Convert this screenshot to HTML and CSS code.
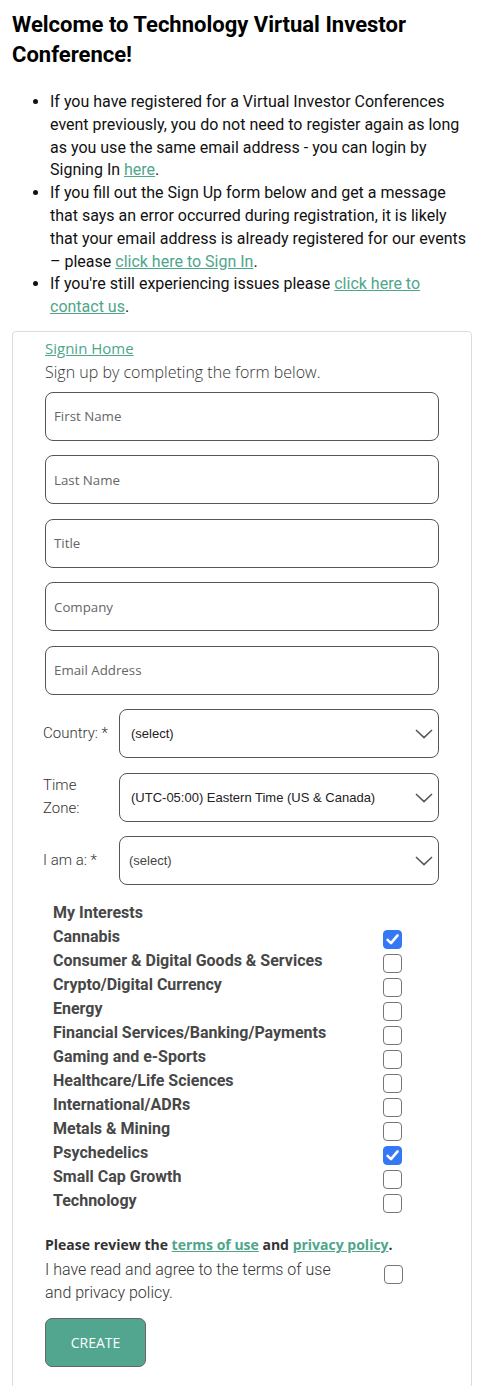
FILE: index.html
```html
<!DOCTYPE html>
<html lang="en">
<head>
<meta charset="utf-8">
<title>Technology Virtual Investor Conference - Sign Up</title>
<link rel="stylesheet" href="styles.css">
</head>
<body>
<h1 class="title">Welcome to Technology Virtual Investor Conference!</h1>
<ul class="notes">
  <li>If you have registered for a Virtual Investor Conferences event previously, you do not need to register again as long as you use the same email address - you can login by Signing In <a href="#">here</a>.</li>
  <li>If you fill out the Sign Up form below and get a message that says an error occurred during registration, it is likely that your email address is already registered for our events – please <a href="#">click here to Sign In</a>.</li>
  <li>If you're still experiencing issues please <a href="#">click here to contact us</a>.</li>
</ul>

<div class="card">
  <a class="home" href="#">Signin Home</a>
  <p class="intro">Sign up by completing the form below.</p>

  <div class="fields">
    <input class="field" type="text" placeholder="First Name">
    <input class="field" type="text" placeholder="Last Name">
    <input class="field" type="text" placeholder="Title">
    <input class="field" type="text" placeholder="Company">
    <input class="field" type="text" placeholder="Email Address">

    <div class="select-row">
      <label class="select-label">Country:&nbsp;*</label>
      <div class="select-wrap">
        <select class="select"><option>(select)</option></select>
        <svg class="chev" width="18" height="10" viewBox="0 0 18 10"><path d="M1 1 L9 8.6 L17 1" fill="none" stroke="#555" stroke-width="1.5"/></svg>
      </div>
    </div>
    <div class="select-row">
      <label class="select-label">Time<br>Zone:</label>
      <div class="select-wrap">
        <select class="select"><option>(UTC-05:00) Eastern Time (US &amp; Canada)</option></select>
        <svg class="chev" width="18" height="10" viewBox="0 0 18 10"><path d="M1 1 L9 8.6 L17 1" fill="none" stroke="#555" stroke-width="1.5"/></svg>
      </div>
    </div>
    <div class="select-row">
      <label class="select-label">I am a:&nbsp;*</label>
      <div class="select-wrap">
        <select class="select select-alt"><option>(select)</option></select>
        <svg class="chev" width="18" height="10" viewBox="0 0 18 10"><path d="M1 1 L9 8.6 L17 1" fill="none" stroke="#555" stroke-width="1.5"/></svg>
      </div>
    </div>
  </div>

  <div class="interests">
    <div class="int-head">My Interests</div>
    <div class="int-row"><span>Cannabis</span><span class="cb checked"><svg width="19" height="19" viewBox="0 0 19 19"><path d="M4.6 9.8 L8 13.2 L14.6 5.4" fill="none" stroke="#fff" stroke-width="2.6" stroke-linecap="round" stroke-linejoin="round"/></svg></span></div>
    <div class="int-row"><span>Consumer &amp; Digital Goods &amp; Services</span><span class="cb"></span></div>
    <div class="int-row"><span>Crypto/Digital Currency</span><span class="cb"></span></div>
    <div class="int-row"><span>Energy</span><span class="cb"></span></div>
    <div class="int-row"><span>Financial Services/Banking/Payments</span><span class="cb"></span></div>
    <div class="int-row"><span>Gaming and e-Sports</span><span class="cb"></span></div>
    <div class="int-row"><span>Healthcare/Life Sciences</span><span class="cb"></span></div>
    <div class="int-row"><span>International/ADRs</span><span class="cb"></span></div>
    <div class="int-row"><span>Metals &amp; Mining</span><span class="cb"></span></div>
    <div class="int-row"><span>Psychedelics</span><span class="cb checked"><svg width="19" height="19" viewBox="0 0 19 19"><path d="M4.6 9.8 L8 13.2 L14.6 5.4" fill="none" stroke="#fff" stroke-width="2.6" stroke-linecap="round" stroke-linejoin="round"/></svg></span></div>
    <div class="int-row"><span>Small Cap Growth</span><span class="cb"></span></div>
    <div class="int-row"><span>Technology</span><span class="cb"></span></div>
  </div>

  <p class="terms">Please review the <a href="#">terms of use</a> and <a href="#">privacy policy</a>.</p>
  <div class="agree">
    <span class="agree-text">I have read and agree to the terms of use and privacy policy.</span>
    <span class="cb agree-cb"></span>
  </div>

  <button class="create" type="button">CREATE</button>
</div>
</body>
</html>
```

FILE: styles.css
```css
html, body {
  margin: 0;
  padding: 0;
  background: #fff;
}
body {
  padding: 0 12px;
  font-family: Roboto, "Liberation Sans", Arial, sans-serif;
  color: #111;
}
a {
  color: #4ea68b;
  text-decoration: underline;
}
.title {
  margin: 10px 0 0;
  font-size: 22px;
  line-height: 30px;
  font-weight: 700;
  color: #000;
}
.notes {
  margin: 21px 0 0;
  padding-left: 38px;
  font-size: 16px;
  line-height: 22.8px;
  color: #111;
}
.card {
  margin-top: 12px;
  width: 460px;
  box-sizing: border-box;
  border: 1px solid #dcdcdc;
  border-radius: 4px;
  padding: 4px 32px 40px;
}
.home {
  display: block;
  font-family: "Open Sans", sans-serif;
  font-size: 15px;
  line-height: 24px;
  width: max-content;
}
.intro {
  margin: 0;
  font-family: "Open Sans", sans-serif;
  font-weight: 300;
  font-size: 16px;
  line-height: 24px;
  color: #333;
}
.fields {
  margin-top: 8px;
  display: flex;
  flex-direction: column;
  gap: 14.5px;
}
.field {
  display: block;
  width: 100%;
  height: 49px;
  box-sizing: border-box;
  border: 1px solid #555;
  border-radius: 8px;
  padding: 0 8px;
  font-family: "Open Sans", sans-serif;
  font-size: 13.3px;
  color: #333;
  background: #fff;
  outline: none;
}
.field::placeholder {
  color: #666;
}
.select-row {
  display: grid;
  grid-template-columns: 74px 1fr;
  align-items: center;
}
.select-label {
  margin-left: -2px;
  font-size: 15px;
  font-weight: 300;
  line-height: 23px;
  color: #333;
  white-space: nowrap;
}
.select-wrap {
  position: relative;
}
.select {
  display: block;
  width: 100%;
  height: 49px;
  box-sizing: border-box;
  border: 1px solid #555;
  border-radius: 8px;
  padding: 0 40px 0 11px;
  background: #fff;
  appearance: none;
  -webkit-appearance: none;
  font-family: "Liberation Sans", Arial, sans-serif;
  font-size: 13px;
  color: #222;
  outline: none;
}
.select-alt {
  padding-left: 9px;
  color: #444;
}
.chev {
  position: absolute;
  right: 6px;
  top: 20px;
  pointer-events: none;
}
.interests {
  margin-top: 15.5px;
  padding-left: 8px;
  font-size: 16px;
  font-weight: 700;
  line-height: 24px;
  color: #474747;
}
.int-head {
  height: 24px;
}
.int-row {
  display: grid;
  grid-template-columns: 330px 19px;
  height: 24px;
}
.cb {
  display: block;
  width: 19px;
  height: 19px;
  box-sizing: border-box;
  border: 1px solid #767676;
  border-radius: 4px;
  background: #fff;
  margin-top: 5px;
}
.cb.checked {
  border-color: #3478f6;
  background: #3478f6;
}
.cb.checked svg {
  display: block;
  margin: -1px;
}
.terms {
  margin: 20.5px 0 0;
  font-family: "Open Sans", sans-serif;
  font-size: 14px;
  font-weight: 700;
  line-height: 23px;
  color: #333;
}
.terms a {
  color: #4ea68b;
}
.agree {
  margin-top: 1.5px;
  display: grid;
  grid-template-columns: 339px 19px;
  align-items: start;
}
.agree-text {
  max-width: 300px;
  font-size: 16px;
  font-weight: 300;
  line-height: 23px;
  color: #333;
}
.agree-cb {
  margin-top: 7px;
}
.create {
  display: block;
  margin-top: 14px;
  width: 101px;
  height: 49px;
  border: 1px solid #666;
  border-radius: 7px;
  background: #52a58e;
  color: #fff;
  font-family: "Open Sans", sans-serif;
  font-size: 14px;
  cursor: pointer;
}
```
